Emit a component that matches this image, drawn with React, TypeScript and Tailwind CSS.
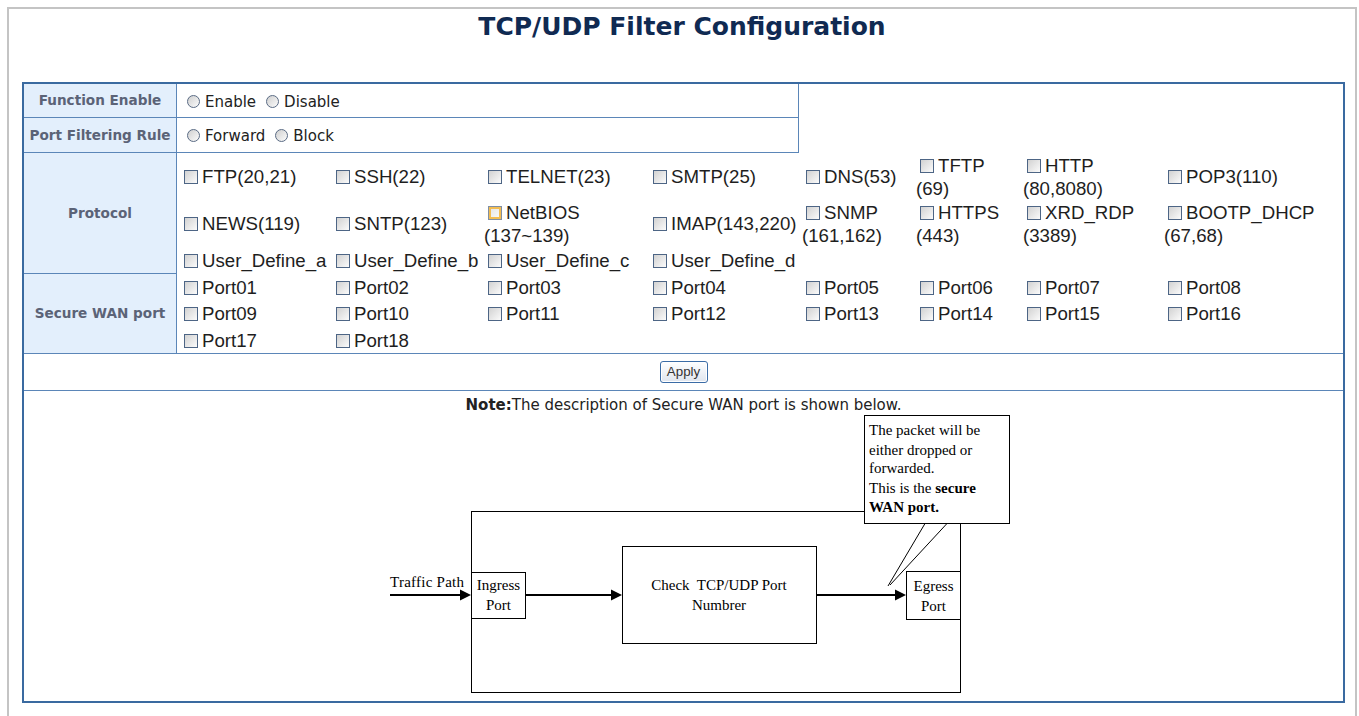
import React from "react";

const Cb = ({ hl = false }: { hl?: boolean }) => (
  <span
    className={
      hl
        ? "inline-block w-[14px] h-[14px] border border-[#7f8ea3] bg-linear-to-br from-[#e4e4e4] to-[#fbfbfb] shadow-[inset_0_0_0_2px_#f3bd52] align-[-1px] ml-1 mr-[4px]"
        : "inline-block w-[14px] h-[14px] border border-[#4d6585] bg-linear-to-br from-[#d2d2d2] to-[#fbfbfb] align-[-1px] ml-1 mr-[4px]"
    }
  />
);

const Radio = () => (
  <span className="inline-block w-[13px] h-[13px] rounded-full border border-[#5a6b84] bg-linear-to-br from-[#cfcfcf] to-[#fcfcfc] align-[-1px] ml-[10px] mr-[5px]" />
);

type Item = { a: string; b?: string; hl?: boolean };

const protoRows: Item[][] = [
  [
    { a: "FTP(20,21)" },
    { a: "SSH(22)" },
    { a: "TELNET(23)" },
    { a: "SMTP(25)" },
    { a: "DNS(53)" },
    { a: "TFTP", b: "(69)" },
    { a: "HTTP", b: "(80,8080)" },
    { a: "POP3(110)" },
  ],
  [
    { a: "NEWS(119)" },
    { a: "SNTP(123)" },
    { a: "NetBIOS", b: "(137~139)", hl: true },
    { a: "IMAP(143,220)" },
    { a: "SNMP", b: "(161,162)" },
    { a: "HTTPS", b: "(443)" },
    { a: "XRD_RDP", b: "(3389)" },
    { a: "BOOTP_DHCP", b: "(67,68)" },
  ],
  [
    { a: "User_Define_a" },
    { a: "User_Define_b" },
    { a: "User_Define_c" },
    { a: "User_Define_d" },
  ],
];

const ports: string[] = Array.from({ length: 18 }, (_, i) =>
  "Port" + String(i + 1).padStart(2, "0")
);

const Cell = ({ it }: { it: Item }) => (
  <div className="flex items-center">
    <div className="leading-[23px] whitespace-nowrap">
      <Cb hl={it.hl} />
      {it.a}
      {it.b && (
        <>
          <br />
          {it.b}
        </>
      )}
    </div>
  </div>
);

const Label = ({ children, cls }: { children: React.ReactNode; cls: string }) => (
  <div
    className={
      "w-[153px] shrink-0 bg-[#e3effc] border-r border-[#5b86b8] flex items-center justify-center font-bold text-[13.6px] text-[#5b6377] " +
      cls
    }
  >
    {children}
  </div>
);

const Diagram = () => (
  <svg width="626" height="282" viewBox="0 0 626 282" className="block ml-[364px]">
    <g fill="none" stroke="#000" strokeWidth="1">
      <rect x="83.5" y="96.5" width="489" height="181" />
    </g>
    <g fill="#fff" stroke="#000" strokeWidth="1">
      <rect x="83.5" y="157.5" width="54" height="46" />
      <rect x="234.5" y="131.5" width="194" height="97" />
      <rect x="518.5" y="156.5" width="54" height="48" />
      <rect x="476.5" y="0.5" width="145" height="108" />
    </g>
    <g stroke="#000" strokeWidth="1">
      <line x1="537" y1="108.5" x2="500" y2="171" />
      <line x1="559" y1="108.5" x2="502" y2="170" />
    </g>
    <g stroke="#000" strokeWidth="2.2">
      <line x1="2" y1="180" x2="75" y2="180" />
      <line x1="138" y1="180" x2="226" y2="180" />
      <line x1="429" y1="180" x2="510" y2="180" />
    </g>
    <g fill="#000">
      <polygon points="72,174.5 83,180 72,185.5" />
      <polygon points="223,174.5 234,180 223,185.5" />
      <polygon points="507,174.5 518,180 507,185.5" />
    </g>
    <g fontFamily="'Liberation Serif', serif" fontSize="15" fill="#000">
      <text x="2" y="172" textLength="74">Traffic Path</text>
      <text x="110.5" y="175" textAnchor="middle">Ingress</text>
      <text x="110.5" y="195" textAnchor="middle">Port</text>
      <text x="331" y="175" textAnchor="middle">{"Check\u00a0 TCP/UDP Port"}</text>
      <text x="331" y="195" textAnchor="middle">Numbrer</text>
      <text x="545.5" y="176" textAnchor="middle">Egress</text>
      <text x="545.5" y="196" textAnchor="middle">Port</text>
      <text x="481" y="20">The packet will be</text>
      <text x="481" y="40">either dropped or</text>
      <text x="481" y="58">forwarded.</text>
      <text x="481" y="78">
        This is the <tspan fontWeight="bold">secure</tspan>
      </text>
      <text x="481" y="97" fontWeight="bold">WAN port.</text>
    </g>
  </svg>
);

export default function App() {
  const cols = "grid grid-cols-[152px_152px_165px_153px_114px_107px_141px_1fr] pl-[3px]";
  return (
    <div className="w-[1359px] h-[716px] bg-white overflow-hidden font-['DejaVu_Sans',sans-serif]">
      <div className="ml-[7px] mt-[7px] w-[1350px] h-[720px] border-2 border-b-0 border-[#c4c4c4]">
        <div className="h-[73px] pt-[3px] text-center">
          <h1 className="leading-[30px] text-[25px] font-bold text-[#102a52]">
            TCP/UDP Filter Configuration
          </h1>
        </div>
        <div className="ml-[13px] w-[1323px] h-[621px] border-2 border-[#3a6aa0] text-[#1e1e1e]">
          {/* rows 1-2 */}
          <div className="w-[775px] border-r border-[#5b86b8]">
            <div className="flex h-[34px] border-b border-[#5b86b8]">
              <Label cls="">Function Enable</Label>
              <div className="flex items-center pt-[3px] text-[15px] text-[#222]">
                <span>
                  <Radio />
                  Enable
                  <Radio />
                  Disable
                </span>
              </div>
            </div>
            <div className="flex h-[35px] border-b border-[#5b86b8]">
              <Label cls="">Port Filtering Rule</Label>
              <div className="flex items-center pt-[2px] text-[15px] text-[#222]">
                <span>
                  <Radio />
                  Forward
                  <Radio />
                  Block
                </span>
              </div>
            </div>
          </div>
          {/* protocol + secure wan */}
          <div className="flex h-[201px] border-b border-[#5b86b8]">
            <div className="flex flex-col">
              <Label cls="h-[121px] border-b">Protocol</Label>
              <Label cls="h-[79px]">Secure WAN port</Label>
            </div>
            <div className="flex-1 font-['Liberation_Sans',Arial,sans-serif] text-[18.67px]">
              <div className={cols + " grid-rows-[47px_47px_27px]"}>
                {protoRows.map((row, r) =>
                  row.map((it, c) => <Cell key={r + "-" + c} it={it} />)
                )}
              </div>
              <div className={cols + " grid-rows-[26px_27px_26px]"}>
                {ports.map((p) => (
                  <Cell key={p} it={{ a: p }} />
                ))}
              </div>
            </div>
          </div>
          {/* apply */}
          <div className="h-[37px] border-b border-[#5b86b8] flex items-center justify-center">
            <button className="w-[48px] h-[22px] rounded-[3px] border border-[#3b6ca6] bg-linear-to-b from-[#ffffff] to-[#dfe5ee] shadow-[inset_0_0_0_1px_#ffffff] font-['Liberation_Sans',Arial,sans-serif] text-[13.33px] leading-[18px] text-[#333]">
              Apply
            </button>
          </div>
          {/* note */}
          <div className="pt-[4px]">
            <div className="h-[20px] leading-[20px] text-center text-[15px] text-[#222]">
              <span className="font-bold">Note:</span>The description of Secure WAN port is shown below.
            </div>
            <Diagram />
          </div>
        </div>
      </div>
    </div>
  );
}
